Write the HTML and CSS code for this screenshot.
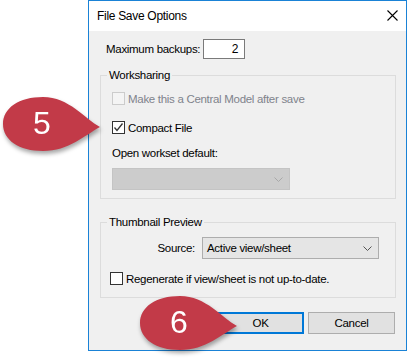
FILE: index.html
```html
<!DOCTYPE html>
<html lang="en">
<head>
    <meta charset="UTF-8">
    <meta name="viewport" content="width=device-width, initial-scale=1.0">
    <title>File Save Options</title>
    <link rel="stylesheet" href="styles.css">
</head>
<body>
    <div class="stage">
        <div class="dialog">
            <div class="titlebar">
                <span class="title">File Save Options</span>
                <svg class="close-btn" width="11" height="11" viewBox="0 0 11 11">
                    <path d="M0.5 0.5 L10.5 10.5 M10.5 0.5 L0.5 10.5" stroke="#000" stroke-width="1.1" fill="none"/>
                </svg>
            </div>
            <div class="dialog-body">
                <div class="backups-row">
                    <span class="backups-label">Maximum backups:</span>
                    <div class="num-input">2</div>
                </div>

                <fieldset class="group">
                    <legend>Worksharing</legend>
                    <div class="group-body worksharing">
                        <div class="check-row disabled">
                            <span class="checkbox"></span>
                            <span class="check-text">Make this a Central Model after save</span>
                        </div>
                        <div class="check-row compact">
                            <span class="checkbox checked">
                                <svg width="11" height="11" viewBox="0 0 11 11">
                                    <path d="M1.5 5.5 L4 8.5 L9.5 1.5" stroke="#333" stroke-width="1.3" fill="none"/>
                                </svg>
                            </span>
                            <span class="check-text">Compact File</span>
                        </div>
                        <div class="field-label">Open workset default:</div>
                        <div class="combo combo-disabled">
                            <span class="combo-text"></span>
                            <svg class="chevron" width="9" height="5" viewBox="0 0 9 5">
                                <path d="M0.5 0.5 L4.5 4.5 L8.5 0.5" stroke="#a8a8a8" stroke-width="1" fill="none"/>
                            </svg>
                        </div>
                    </div>
                </fieldset>

                <fieldset class="group group-thumb">
                    <legend>Thumbnail Preview</legend>
                    <div class="group-body thumbnail">
                        <div class="source-row">
                            <span class="source-label">Source:</span>
                            <div class="combo combo-source">
                                <span class="combo-text">Active view/sheet</span>
                                <svg class="chevron" width="9" height="5" viewBox="0 0 9 5">
                                    <path d="M0.5 0.5 L4.5 4.5 L8.5 0.5" stroke="#555" stroke-width="1" fill="none"/>
                                </svg>
                            </div>
                        </div>
                        <div class="check-row regen">
                            <span class="checkbox"></span>
                            <span class="check-text">Regenerate if view/sheet is not up-to-date.</span>
                        </div>
                    </div>
                </fieldset>

                <div class="buttons">
                    <button class="btn btn-default">OK</button>
                    <button class="btn">Cancel</button>
                </div>
            </div>
        </div>

        <div class="pin pin-5">
            <svg width="100" height="58" viewBox="0 0 100 58">
                <path d="M99 32 C 84 24 68 2 42 2 C 18 2 2 13 2 29 C 2 45 18 56 42 56 C 68 56 84 40 99 32 Z" fill="#c23a48"/>
            </svg>
            <span class="pin-num">5</span>
        </div>
        <div class="pin pin-6">
            <svg width="100" height="58" viewBox="0 0 100 58">
                <path d="M99 32 C 84 24 68 2 42 2 C 18 2 2 13 2 29 C 2 45 18 56 42 56 C 68 56 84 40 99 32 Z" fill="#c23a48"/>
            </svg>
            <span class="pin-num">6</span>
        </div>
    </div>
</body>
</html>
```

FILE: styles.css
```css
body {
    margin: 0;
    background-color: #fff;
    font-family: "Liberation Sans", Arial, sans-serif;
    font-size: 11.5px;
    letter-spacing: -0.3px;
    color: #000;
}

.stage {
    position: relative;
    width: 407px;
    height: 360px;
    overflow: hidden;
    background-color: #fff;
}

.dialog {
    margin-left: 88px;
    width: 319px;
    height: 351px;
    box-sizing: border-box;
    border: 1px solid #1a82d6;
    background-color: #f0f0f0;
    overflow: hidden;
}

.titlebar {
    height: 30px;
    background-color: #fff;
    display: flex;
    align-items: center;
    justify-content: space-between;
    padding: 0 8px 0 8px;
}

.title {
    font-size: 12px;
    line-height: 16px;
}

.close-btn {
    display: block;
    margin-top: -1px;
}

.dialog-body {
    padding: 8px 10px 0 11px;
}

.backups-row {
    display: flex;
    align-items: center;
    height: 20px;
    padding-left: 6px;
}

.backups-label {
    width: 97px;
    line-height: 16px;
    white-space: nowrap;
}

.num-input {
    width: 42px;
    height: 20px;
    box-sizing: border-box;
    border: 1px solid #7a7a7a;
    background-color: #fff;
    text-align: right;
    padding-right: 6px;
    line-height: 18px;
    font-size: 12px;
}

.group {
    margin: 8px 0 0 0;
    padding: 0;
    border: 1px solid #dcdcdc;
    border-radius: 0;
    min-width: 0;
    width: 296px;
    box-sizing: border-box;
}

.group-thumb {
    margin-top: 15px;
}

.group legend {
    margin-left: 6px;
    padding: 0 2px;
    line-height: 16px;
    height: 16px;
}

.worksharing {
    padding: 9px 11px 8px 11px;
}

.thumbnail {
    padding: 7px 9px 12px 9px;
}

.check-row {
    display: flex;
    align-items: center;
    height: 13px;
}

.check-row.compact {
    margin-top: 16px;
}

.check-row.regen {
    margin-top: 13px;
}

.checkbox {
    width: 13px;
    height: 13px;
    box-sizing: border-box;
    border: 1px solid #333;
    background-color: #fff;
    display: flex;
    align-items: center;
    justify-content: center;
    flex-shrink: 0;
}

.check-row.disabled .checkbox {
    border-color: #cccccc;
    background-color: #f4f4f4;
}

.check-row.disabled .check-text {
    color: #7f838c;
}

.check-text {
    margin-left: 3px;
    line-height: 16px;
    white-space: nowrap;
}

.field-label {
    margin-top: 11px;
    line-height: 16px;
}

.combo {
    height: 22px;
    box-sizing: border-box;
    display: flex;
    align-items: center;
    justify-content: space-between;
    padding: 0 6px 0 4px;
}

.combo-disabled {
    margin-top: 7px;
    width: 178px;
    background-color: #cccccc;
    border: 1px solid #c4c4c4;
}

.source-row {
    display: flex;
    align-items: center;
}

.source-label {
    width: 85px;
    text-align: right;
    margin-right: 7px;
    line-height: 16px;
}

.combo-source {
    width: 177px;
    background-color: #e5e5e5;
    border: 1px solid #adadad;
}

.buttons {
    display: flex;
    justify-content: flex-end;
    gap: 4px;
    margin-top: 14px;
    padding-right: 1px;
}

.btn {
    width: 87px;
    height: 22px;
    box-sizing: border-box;
    background-color: #e1e1e1;
    border: 1px solid #adadad;
    font-family: inherit;
    font-size: 11.5px;
    letter-spacing: -0.3px;
    color: #000;
    padding: 0;
}

.btn-default {
    border: 2px solid #0078d7;
}

/* callout markers over the dialog */
.pin {
    position: absolute;
    width: 100px;
    height: 58px;
    filter: drop-shadow(1px 3px 2px rgba(0, 0, 0, 0.35));
}

.pin svg {
    display: block;
}

.pin-5 {
    left: 1px;
    top: 95px;
}

.pin-6 {
    left: 138px;
    top: 294px;
}

.pin-num {
    position: absolute;
    left: 0;
    width: 82px;
    top: 10px;
    text-align: center;
    font-family: "Liberation Sans", Arial, sans-serif;
    font-size: 32px;
    letter-spacing: 0;
    line-height: 36px;
    color: #fff;
}
```
